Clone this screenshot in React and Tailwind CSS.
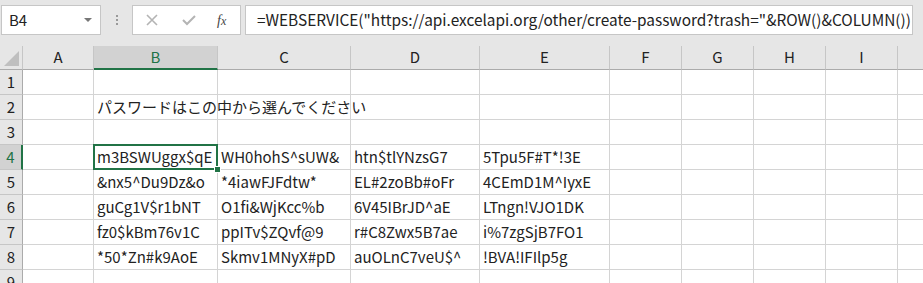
import React from 'react';

const cols = [
  { name: 'A', w: 71 },
  { name: 'B', w: 124 },
  { name: 'C', w: 133 },
  { name: 'D', w: 129 },
  { name: 'E', w: 130 },
  { name: 'F', w: 72 },
  { name: 'G', w: 72 },
  { name: 'H', w: 72 },
  { name: 'I', w: 72 },
  { name: '', w: 40 },
];

const data = {
  2: { B: 'パスワードはこの中から選んでください' },
  4: { B: 'm3BSWUggx$qE', C: 'WH0hohS^sUW&', D: 'htn$tlYNzsG7', E: '5Tpu5F#T*!3E' },
  5: { B: '&nx5^Du9Dz&o', C: '*4iawFJFdtw*', D: 'EL#2zoBb#oFr', E: '4CEmD1M^IyxE' },
  6: { B: 'guCg1V$r1bNT', C: 'O1fi&WjKcc%b', D: '6V45IBrJD^aE', E: 'LTngn!VJO1DK' },
  7: { B: 'fz0$kBm76v1C', C: 'ppITv$ZQvf@9', D: 'r#C8Zwx5B7ae', E: 'i%7zgSjB7FO1' },
  8: { B: '*50*Zn#k9AoE', C: 'Skmv1MNyX#pD', D: 'auOLnC7veU$^', E: '!BVA!IFIlp5g' },
};

const rows = [1, 2, 3, 4, 5, 6, 7, 8, 9];

const font = { fontFamily: '"Noto Sans CJK JP", "Noto Sans", sans-serif' };

function Toolbar() {
  return (
    <div className="flex h-[46px] items-start pt-[5px] pl-[1px]">
      <div className="relative flex h-[30px] w-[100px] items-center border border-[#c6c6c6] bg-white pl-[7px] text-[15px] text-[#222]">
        B4
        <div className="absolute right-[8px] top-[12px] h-0 w-0 border-x-[4px] border-t-[4px] border-x-transparent border-t-[#777]"></div>
      </div>
      <div className="flex h-[30px] w-[31px] flex-col items-center justify-center gap-[2px]">
        <div className="h-[2px] w-[2px] bg-[#999]"></div>
        <div className="h-[2px] w-[2px] bg-[#999]"></div>
        <div className="h-[2px] w-[2px] bg-[#999]"></div>
      </div>
      <div className="flex h-[30px] w-[109px] items-center border border-[#c6c6c6] bg-white">
        <svg width="14" height="14" viewBox="0 0 14 14" className="ml-[12px]">
          <path d="M2 2 L12 12 M12 2 L2 12" stroke="#b4b4b4" strokeWidth="1.6" fill="none" />
        </svg>
        <svg width="16" height="14" viewBox="0 0 16 14" className="ml-[22px]">
          <path d="M2 7 L6 11 L14 3" stroke="#b4b4b4" strokeWidth="2" fill="none" />
        </svg>
        <span className="ml-[20px] text-[14px] italic text-[#444]" style={{ fontFamily: '"Liberation Serif", serif' }}>
          f<span className="text-[12px]">x</span>
        </span>
      </div>
      <div className="ml-[4px] flex h-[30px] w-[668px] items-center overflow-hidden whitespace-nowrap border border-[#c6c6c6] bg-white pl-[11px] text-[15.4px] text-[#222]">
        =WEBSERVICE("https://api.excelapi.org/other/create-password?trash="&ROW()&COLUMN())
      </div>
    </div>
  );
}

export default function App() {
  const template = '23px ' + cols.map((c) => c.w + 'px').join(' ');
  return (
    <div className="h-[283px] w-[923px] overflow-hidden bg-[#e6e6e6]" style={font}>
      <Toolbar />
      <div className="grid bg-white" style={{ gridTemplateColumns: template, gridTemplateRows: '24px repeat(9, 25px)' }}>
        <div className="relative border-r border-b border-r-[#c6c6c6] border-b-[#ababab] bg-[#e6e6e6]">
          <svg width="15" height="15" viewBox="0 0 15 15" className="absolute bottom-[3px] right-[3px]">
            <path d="M15 0 L15 15 L0 15 Z" fill="#bfbfbf" />
          </svg>
        </div>
        {cols.map((c) =>
          c.name === 'B' ? (
            <div key={c.name} className="flex items-center justify-center border-r border-b-2 border-r-[#c6c6c6] border-b-[#217346] bg-[#d2d2d2] text-[15px] text-[#217346]">
              {c.name}
            </div>
          ) : (
            <div key={c.name + 'h'} className="flex items-center justify-center border-r border-b border-r-[#c6c6c6] border-b-[#ababab] bg-[#e6e6e6] text-[15px] text-[#222]">
              {c.name}
            </div>
          )
        )}
        {rows.map((r) => (
          <React.Fragment key={r}>
            {r === 4 ? (
              <div className="flex items-center justify-center border-r-2 border-b border-r-[#217346] border-b-[#c6c6c6] bg-[#d2d2d2] text-[15px] text-[#217346]">
                {r}
              </div>
            ) : (
              <div className="flex items-center justify-center border-r border-b border-r-[#ababab] border-b-[#c6c6c6] bg-[#e6e6e6] text-[15px] text-[#222]">
                {r}
              </div>
            )}
            {cols.map((c) => {
              const v = data[r] && data[r][c.name];
              const selected = r === 4 && c.name === 'B';
              return (
                <div
                  key={c.name + r}
                  className={
                    'relative flex items-center whitespace-nowrap border-r border-b border-[#d4d4d4] pl-[3px] pt-[1px] text-[15px] text-[#222]' +
                    (selected ? ' z-20' : c.name === 'B' ? ' z-10' : '')
                  }
                >
                  {v}
                  {selected && (
                    <>
                      <div className="pointer-events-none absolute left-[-1px] top-[-1px] h-[26px] w-[125px] border-2 border-[#217346]"></div>
                      <div className="absolute bottom-[-4px] right-[-4px] h-[7px] w-[7px] border border-white bg-[#217346]"></div>
                    </>
                  )}
                </div>
              );
            })}
          </React.Fragment>
        ))}
      </div>
    </div>
  );
}
